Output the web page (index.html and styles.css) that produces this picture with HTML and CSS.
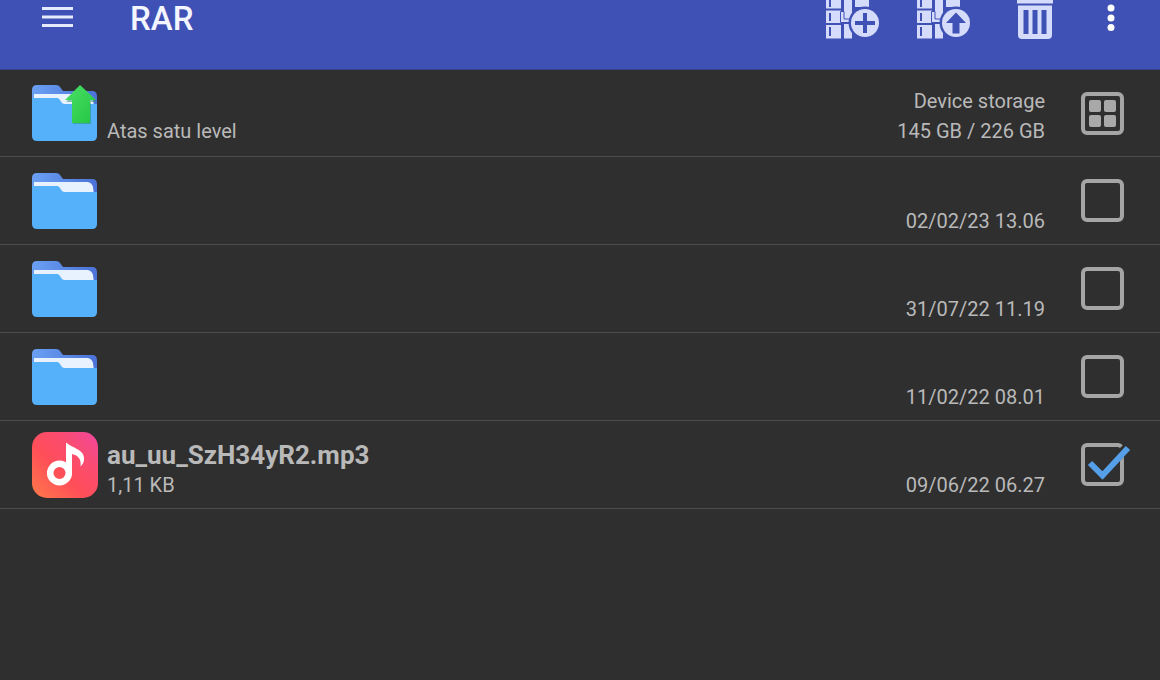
FILE: index.html
```html
<!DOCTYPE html>
<html lang="id">
<head>
  <meta charset="UTF-8" />
  <meta name="viewport" content="width=device-width, initial-scale=1.0" />
  <title>RAR</title>
  <link rel="stylesheet" href="styles.css">
</head>
<body>
  <!-- shared icon shapes -->
  <svg class="defs" aria-hidden="true">
    <defs>
      <linearGradient id="folderBack" x1="0" y1="0" x2="1" y2="0">
        <stop offset="0" stop-color="#6aa0f3" />
        <stop offset="1" stop-color="#4b72d8" />
      </linearGradient>
      <linearGradient id="arrowFill" x1="0" y1="0" x2="1" y2="1">
        <stop offset="0" stop-color="#4be066" />
        <stop offset="1" stop-color="#22c544" />
      </linearGradient>
      <linearGradient id="musicFill" x1="0" y1="1" x2="1" y2="0">
        <stop offset="0" stop-color="#ff7a4a" />
        <stop offset="0.4" stop-color="#ff4f58" />
        <stop offset="0.7" stop-color="#fb4c72" />
        <stop offset="1" stop-color="#ef479f" />
      </linearGradient>
      <symbol id="folder" viewBox="0 0 66 56">
        <path fill="url(#folderBack)" d="M5 0h19q3 0 4 2l3 4h29q5 0 5 5v14H0V5q0-5 5-5z" />
        <path fill="#e8f2fe" d="M2 9h54q4 1 5 5l1 8H2z" />
        <path fill="#56b1fb" d="M0 13h25q2 0 3 2l2 3q1 1 3 1h32v32q0 5-5 5H5q-5 0-5-5z" />
      </symbol>
      <symbol id="books" viewBox="0 0 54 40">
        <g fill="#d5dcfb">
          <path d="M0 0h15v8.500H0zM0 10.500h15v12.500H0zM0 25h15v13.500H0z" />
          <path d="M18 0h8v21h-8zM18 24h8v14.500h-8zM29 0h14v7H29z" />
        </g>
        <path fill="#4051b5" d="M3 0h2v7H3zM3 13h2v8H3zM3 27h2v9H3z" />
        <path fill="#d5dcfb" stroke="#4051b5" d="M14.500 11.500h3.500v7.500h8v3.500H14.500z" />
        <circle cx="39" cy="23" r="16.500" fill="#4051b5" />
        <circle cx="39" cy="23" r="14" fill="#d5dcfb" />
      </symbol>
    </defs>
  </svg>

  <header class="toolbar">
    <button type="button" class="icon-btn menu-btn" aria-label="Menu">
      <svg width="31" height="40" viewBox="0 0 31 40"><path fill="#e6eaff" d="M0 7h31v3H0zM0 15.500h31v3H0zM0 24h31v3H0z" /></svg>
    </button>
    <h1>RAR</h1>
    <div class="actions">
      <button type="button" class="icon-btn" aria-label="Add to archive">
        <svg width="54" height="40" viewBox="0 0 54 40">
          <use href="#books" />
          <path fill="#4051b5" d="M37 13h4v8h8v4h-8v8h-4v-8h-8v-4h8z" />
        </svg>
      </button>
      <button type="button" class="icon-btn" aria-label="Extract">
        <svg width="54" height="40" viewBox="0 0 54 40">
          <use href="#books" />
          <path fill="#4051b5" d="M39 12.500L49 23h-6.500v10.500h-7V23H29z" />
        </svg>
      </button>
      <button type="button" class="icon-btn delete-btn" aria-label="Delete">
        <svg width="36" height="40" viewBox="0 0 36 40">
          <path fill="#d5dcfb" d="M0 0h36v3.500H0z" />
          <path fill="#d5dcfb" fill-rule="evenodd" d="M1 5.500h34V35q0 4-4 4H5q-4 0-4-4zM6.500 10v24h5V10zM15.500 10v24h5V10zM24.500 10v24h5V10z" />
        </svg>
      </button>
      <button type="button" class="icon-btn more-btn" aria-label="More options">
        <svg width="8" height="40" viewBox="0 0 8 40" fill="#fff"><circle cx="4" cy="8" r="3.500" /><circle cx="4" cy="18" r="3.500" /><circle cx="4" cy="27.500" r="3.500" /></svg>
      </button>
    </div>
  </header>

  <main>
    <ul class="file-list">
      <li class="row">
        <svg class="thumb" width="66" height="56" viewBox="0 0 66 56">
          <use href="#folder" />
          <path fill="#258e63" opacity=".5" d="M49 2l16 15h-6v22H41V17h-7z" />
          <path fill="url(#arrowFill)" d="M48 0l16 15h-6v23H40V15h-7z" />
        </svg>
        <div class="name-col">
          <span class="meta">Atas satu level</span>
        </div>
        <div class="info-col">
          <span class="meta">Device storage</span>
          <span class="meta">145 GB / 226 GB</span>
        </div>
        <button type="button" class="box grid-btn" aria-label="Grid view">
          <span></span><span></span><span></span><span></span>
        </button>
      </li>
      <li class="row">
        <svg class="thumb" width="66" height="56"><use href="#folder" /></svg>
        <div class="name-col"></div>
        <div class="info-col"><label class="meta" for="item1">02/02/23 13.06</label></div>
        <div class="check"><input type="checkbox" class="box" id="item1"></div>
      </li>
      <li class="row">
        <svg class="thumb" width="66" height="56"><use href="#folder" /></svg>
        <div class="name-col"></div>
        <div class="info-col"><label class="meta" for="item2">31/07/22 11.19</label></div>
        <div class="check"><input type="checkbox" class="box" id="item2"></div>
      </li>
      <li class="row">
        <svg class="thumb" width="66" height="56"><use href="#folder" /></svg>
        <div class="name-col"></div>
        <div class="info-col"><label class="meta" for="item3">11/02/22 08.01</label></div>
        <div class="check"><input type="checkbox" class="box" id="item3"></div>
      </li>
      <li class="row">
        <svg class="thumb" width="66" height="66" viewBox="0 0 66 66">
          <rect width="66" height="66" rx="15" fill="url(#musicFill)" />
          <circle cx="27.500" cy="41" r="9.300" fill="none" stroke="#fff" stroke-width="6.500" />
          <path fill="#fff" d="M34 10.500c7 6 18.500 7 18 16.500 0 3-1 5-3.500 7.500 1-7-2-11-8.500-12.500V41H34z" />
        </svg>
        <div class="name-col">
          <label class="file-name" for="item4">au_uu_SzH34yR2.mp3</label>
          <span class="meta">1,11 KB</span>
        </div>
        <div class="info-col"><span class="meta">09/06/22 06.27</span></div>
        <div class="check">
          <input type="checkbox" class="box" id="item4" checked>
          <svg class="tick" width="50" height="44" viewBox="0 0 50 44">
            <path fill="none" stroke="#2f2f2f" stroke-width="9" d="M32 18L46.500 4" />
            <path fill="none" stroke="#559ee8" stroke-width="6" d="M9 20l12.500 12.500L47 5" />
          </svg>
        </div>
      </li>
    </ul>
  </main>
</body>
</html>
```
FILE: styles.css
```css
* {
  box-sizing: border-box;
}

body {
  margin: 0;
  min-height: 100vh;
  font-family: Roboto, sans-serif;
  background: #2f2f2f;
  color: #b9b9b9;
}

.defs {
  position: absolute;
  width: 0;
  height: 0;
}

.toolbar {
  display: flex;
  align-items: flex-start;
  padding: 0 45px 29px 42px;
  background: #4051b5;
  border-bottom: 1px solid #38408a;
}

.toolbar h1 {
  margin: 0 0 0 57px;
  font-size: 33px;
  font-weight: 500;
  line-height: 38px;
  color: #f3f5ff;
}

.icon-btn {
  display: block;
  padding: 0;
  border: none;
  background: none;
  cursor: pointer;
}

.icon-btn svg {
  display: block;
}

.actions {
  display: flex;
  gap: 37px;
  margin-left: auto;
}

.delete-btn {
  margin: 0 17px 0 9px;
}

.file-list {
  margin: 0;
  padding: 0;
  list-style: none;
}

.row {
  display: flex;
  align-items: center;
  min-height: 88px;
  padding: 0 36px 0 32px;
  border-bottom: 1px solid #4c4c4c;
}

.row:first-child {
  min-height: 87px;
}

.thumb {
  flex: none;
}

.name-col,
.info-col {
  display: flex;
  flex-direction: column;
  align-self: stretch;
  justify-content: flex-end;
  padding-bottom: 8px;
}

.row:first-child .name-col,
.row:first-child .info-col {
  padding-bottom: 10px;
}

.name-col {
  flex: 1;
  padding-left: 9px;
}

.info-col {
  margin-right: 36px;
  text-align: right;
}

.meta {
  font-size: 20px;
  line-height: 30px;
}

.file-name {
  font-size: 26px;
  font-weight: 700;
  line-height: 30px;
}

.box {
  display: block;
  width: 43px;
  height: 43px;
  margin: 0;
  border: 4px solid #a5a5a5;
  border-radius: 6px;
  background: none;
  appearance: none;
  cursor: pointer;
}

.grid-btn {
  display: grid;
  grid-template-columns: 12px 12px;
  grid-template-rows: 12px 12px;
  gap: 3px;
  place-content: center;
  padding: 0;
}

.grid-btn span {
  border-radius: 2px;
  background: #a9a9a9;
}

.check {
  position: relative;
}

/* the tick runs out over the corner of its box */
.tick {
  display: none;
  position: absolute;
  top: 0;
  left: 0;
  pointer-events: none;
}

.box:checked + .tick {
  display: block;
}
```
